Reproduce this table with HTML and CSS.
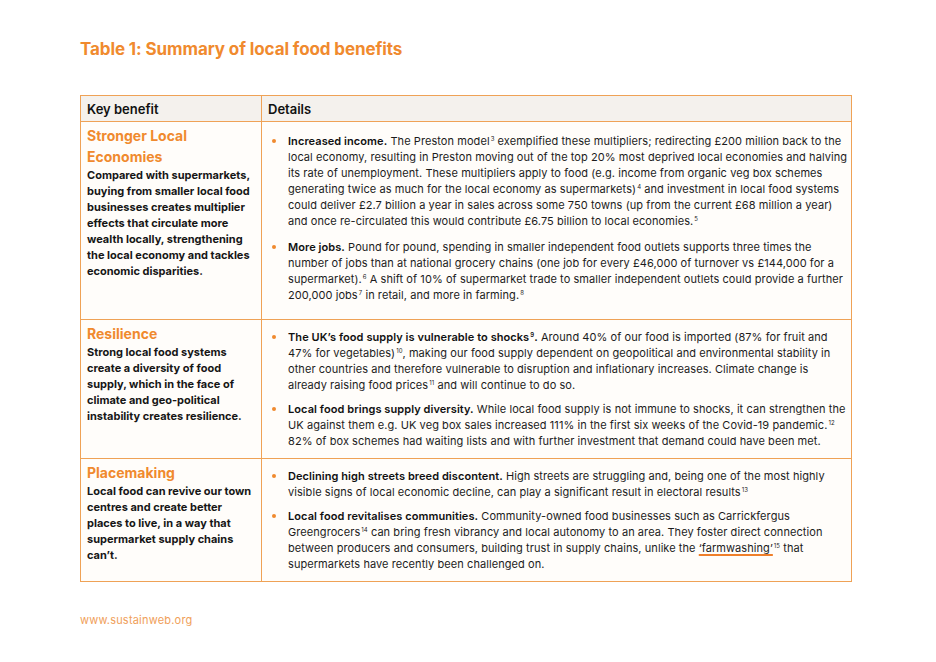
FILE: index.html
```html
<!DOCTYPE html>
<html lang="en">
<head>
<meta charset="utf-8">
<title>Table 1: Summary of local food benefits</title>
<link rel="stylesheet" href="styles.css">
</head>
<body>
<main class="page">
  <h1 class="title">Table 1: Summary of local food benefits</h1>
  <table class="benefits">
    <thead>
      <tr>
        <th class="col-key">Key benefit</th>
        <th class="col-details">Details</th>
      </tr>
    </thead>
    <tbody>
      <tr>
        <td class="key">
          <h2 class="key-title">Stronger Local Economies</h2>
          <p class="key-text">Compared with supermarkets, buying from smaller local food businesses creates multiplier effects that circulate more wealth locally, strengthening the local economy and tackles economic disparities.</p>
        </td>
        <td class="details">
          <ul class="points">
            <li><b>Increased income.</b> The Preston model<sup>3</sup> exemplified these multipliers; redirecting £200 million back to the local economy, resulting in Preston moving out of the top 20% most deprived local economies and halving its rate of unemployment. These multipliers apply to food (e.g. income from organic veg box schemes generating twice as much for the local economy as supermarkets)<sup>4</sup> and investment in local food systems could deliver £2.7 billion a year in sales across some 750 towns (up from the current £68 million a year) and once re-circulated this would contribute £6.75 billion to local economies.<sup>5</sup></li>
            <li><b>More jobs.</b> Pound for pound, spending in smaller independent food outlets supports three times the number of jobs than at national grocery chains (one job for every £46,000 of turnover vs £144,000 for a supermarket).<sup>6</sup> A shift of 10% of supermarket trade to smaller independent outlets could provide a further 200,000 jobs<sup>7</sup> in retail, and more in farming.<sup>8</sup></li>
          </ul>
        </td>
      </tr>
      <tr>
        <td class="key">
          <h2 class="key-title">Resilience</h2>
          <p class="key-text">Strong local food systems create a diversity of food supply, which in the face of climate and geo-political instability creates resilience.</p>
        </td>
        <td class="details">
          <ul class="points">
            <li><b>The UK’s food supply is vulnerable to shocks<sup>9</sup>.</b> Around 40% of our food is imported (87% for fruit and 47% for vegetables)<sup>10</sup>, making our food supply dependent on geopolitical and environmental stability in other countries and therefore vulnerable to disruption and inflationary increases. Climate change is already raising food prices<sup>11</sup> and will continue to do so.</li>
            <li><b>Local food brings supply diversity.</b> While local food supply is not immune to shocks, it can strengthen the UK against them e.g. UK veg box sales increased 111% in the first six weeks of the Covid-19 pandemic.<sup>12</sup> 82% of box schemes had waiting lists and with further investment that demand could have been met.</li>
          </ul>
        </td>
      </tr>
      <tr>
        <td class="key">
          <h2 class="key-title">Placemaking</h2>
          <p class="key-text">Local food can revive our town centres and create better places to live, in a way that supermarket supply chains can’t.</p>
        </td>
        <td class="details">
          <ul class="points">
            <li><b>Declining high streets breed discontent.</b> High streets are struggling and, being one of the most highly visible signs of local economic decline, can play a significant result in electoral results<sup>13</sup></li>
            <li><b>Local food revitalises communities.</b> Community-owned food businesses such as Carrickfergus Greengrocers<sup>14</sup> can bring fresh vibrancy and local autonomy to an area. They foster direct connection between producers and consumers, building trust in supply chains, unlike the <span class="marked">‘farmwashing’</span><sup>15</sup> that supermarkets have recently been challenged on.</li>
          </ul>
        </td>
      </tr>
    </tbody>
  </table>
  <footer class="footer">www.sustainweb.org</footer>
</main>
</body>
</html>
```

FILE: styles.css
```css
* { box-sizing: border-box; }

html, body {
  margin: 0;
  padding: 0;
  background: #ffffff;
}

body {
  font-family: Inter, "Liberation Sans", sans-serif;
  color: #1c1c1c;
}

.page {
  width: 936px;
  height: 662px;
  padding: 38px 0 0 80px;
}

.title {
  margin: 0 0 35px 0;
  font-size: 17px;
  line-height: 22px;
  font-weight: 700;
  color: #f08a2e;
  letter-spacing: -0.1px;
}

.benefits {
  width: 772px;
  border-collapse: collapse;
  table-layout: fixed;
}

.benefits th,
.benefits td {
  border: 1px solid #efa256;
  vertical-align: top;
  text-align: left;
}

.benefits th {
  background: #f4f1ed;
  font-size: 13px;
  font-weight: 600;
  line-height: 16px;
  padding: 5px 6px 4px 6px;
  height: 26px;
  color: #111;
}

.col-key { width: 181px; }

.benefits td {
  background: #fffdfa;
}

.key {
  padding: 3px 6px 8px 6px;
}

.key-title {
  margin: 0;
  font-size: 14px;
  line-height: 21px;
  font-weight: 700;
  color: #f08a2e;
}

.key-text {
  margin: 0;
  font-size: 11px;
  line-height: 16px;
  font-weight: 700;
  color: #161616;
}

.details {
  padding: 9px 2px 9px 6px;
}

tbody tr:first-child .details {
  padding-top: 11px;
  padding-bottom: 16px;
}

.points {
  list-style: none;
  margin: 0;
  padding: 0;
}

.points li {
  position: relative;
  padding-left: 20px;
  font-size: 11px;
  line-height: 16px;
  letter-spacing: 0.07px;
  color: #1c1c1c;
}

.points li + li {
  margin-top: 8px;
}

tbody tr:first-child .points li + li {
  margin-top: 10px;
}

.points li::before {
  content: "";
  position: absolute;
  left: 4px;
  top: 6px;
  width: 4px;
  height: 4px;
  border-radius: 50%;
  background: #f08a2e;
}

.points b {
  font-weight: 600;
  color: #111;
}

sup {
  font-size: 6px;
  line-height: 0;
  vertical-align: 4px;
  margin-left: 1px;
}

.marked {
  text-decoration: underline;
  text-decoration-color: #ef7f2a;
  text-decoration-thickness: 1.5px;
  text-underline-offset: 2px;
}

.footer {
  margin-top: 31px;
  font-size: 11px;
  line-height: 14px;
  color: #f0a05a;
  letter-spacing: 0.2px;
}
```
